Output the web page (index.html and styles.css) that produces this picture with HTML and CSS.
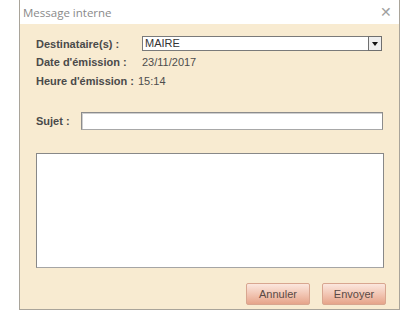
FILE: index.html
```html
<!DOCTYPE html>
<html lang="fr">
<head>
  <meta charset="UTF-8" />
  <title>Message interne</title>
  <link rel="stylesheet" href="styles.css">
</head>
<body>
  <div class="fenetre">
    <div class="titre">
      <span>Message interne</span>
      <span class="fermer">&#x2715;</span>
    </div>
    <div class="corps">
      <div class="ligne">
        <label class="lib">Destinataire(s) :</label>
        <div class="combo">
          <span class="combo-val">MAIRE</span>
          <span class="combo-btn"><span class="fleche"></span></span>
        </div>
      </div>
      <div class="ligne info">
        <label class="lib">Date d'émission :</label>
        <span class="val">23/11/2017</span>
      </div>
      <div class="ligne info">
        <label class="lib">Heure d'émission :</label>
        <span class="val">15:14</span>
      </div>
      <div class="ligne sujet">
        <label class="lib court">Sujet :</label>
        <div class="champ"></div>
      </div>
      <div class="texte"></div>
      <div class="boutons">
        <button>Annuler</button>
        <button>Envoyer</button>
      </div>
    </div>
  </div>
</body>
</html>
```

FILE: styles.css
```css
body {
  margin: 0;
  background: white;
  font-family: "Liberation Sans", Arial, sans-serif;
}
.fenetre {
  margin-left: 19px;
  width: 379px;
  height: 309px;
  border: 1px solid #a9a49a;
  border-top: none;
  background: #f8ebd1;
  display: flex;
  flex-direction: column;
}
.titre {
  height: 24px;
  background: white;
  display: flex;
  align-items: center;
  justify-content: space-between;
  padding: 0 7px 0 3px;
  font-family: "Open Sans", "Noto Sans", sans-serif;
  font-size: 11.5px;
  color: #8a8a8a;
}
.fermer {
  font-size: 14px;
  color: #a0a0a0;
  font-family: "DejaVu Sans", sans-serif;
  font-weight: 200;
}
.corps {
  padding: 12px 15px 0 16px;
  flex: 1;
  display: flex;
  flex-direction: column;
}
.ligne {
  display: flex;
  align-items: center;
  height: 15px;
}
.info {
  margin-top: 6px;
  height: 10px;
}
.ligne.info + .ligne.info {
  margin-top: 9px;
}
.lib {
  width: 106px;
  flex-shrink: 0;
  font-size: 11px;
  font-weight: bold;
  color: #4a4a4a;
}
.info .lib {
  width: auto;
  margin-right: 4px;
}
.ligne.info:nth-child(2) .lib {
  width: 102px;
}
.lib.court {
  width: 45px;
}
.val {
  font-size: 11px;
  color: #4d4d4d;
}
.combo {
  width: 240px;
  height: 15px;
  display: flex;
  border: 1px solid #7a7a7a;
  border-right: none;
  background: white;
  box-sizing: border-box;
}
.combo-val {
  flex: 1;
  font-size: 11px;
  color: #333;
  padding-left: 2px;
  line-height: 13px;
}
.combo-btn {
  width: 14px;
  height: 15px;
  margin-top: -1px;
  box-sizing: border-box;
  background: #eeeeee;
  border: 1px solid #6f6f6f;
  display: flex;
  align-items: center;
  justify-content: center;
}
.fleche {
  width: 0;
  height: 0;
  border-left: 3px solid transparent;
  border-right: 3px solid transparent;
  border-top: 4px solid #111;
}
.sujet {
  margin-top: 26px;
  height: 18px;
}
.champ {
  width: 302px;
  height: 18px;
  box-sizing: border-box;
  background: white;
  border: 1px solid #8c8c8c;
  border-bottom-color: #a8a8a8;
  box-shadow: inset 1px 1px 0 #cfcfcf;
}
.texte {
  margin-top: 23px;
  width: 348px;
  height: 115px;
  box-sizing: border-box;
  background: white;
  border: 1px solid #888;
  border-bottom-color: #a5a5a5;
}
.boutons {
  margin-top: 15px;
  margin-right: -2px;
  display: flex;
  justify-content: flex-end;
  gap: 12px;
}
button {
  width: 64px;
  height: 22px;
  font-family: "Liberation Sans", Arial, sans-serif;
  font-size: 11px;
  color: #5a4a45;
  border: 1px solid #d8a690;
  border-radius: 2px;
  background: linear-gradient(#fbe7de, #f1c3b0 55%, #e6a48a);
}
```
